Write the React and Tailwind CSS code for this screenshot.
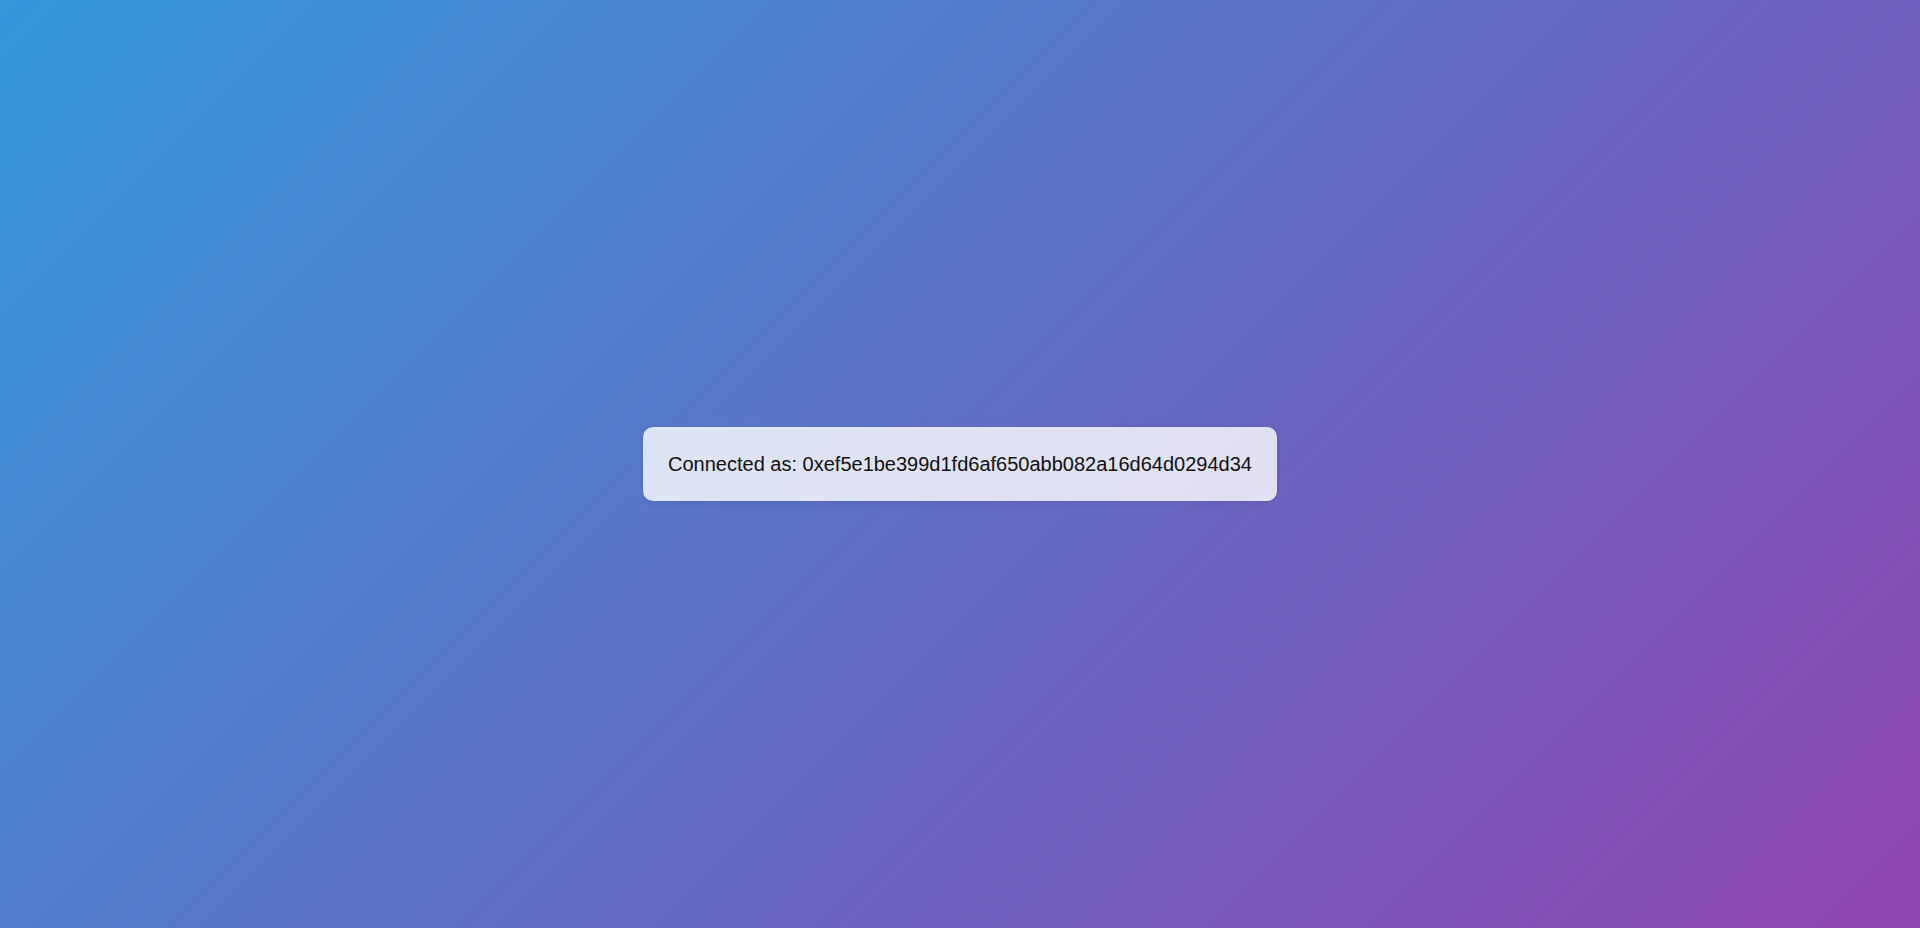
import React from "react";

export default function App() {
  const address = "0xef5e1be399d1fd6af650abb082a16d64d0294d34";

  return (
    <div className="h-screen w-full flex items-center justify-center bg-[linear-gradient(135deg,#3498db,#8e44ad)] font-['Liberation_Sans',Arial,sans-serif]">
      <div className="rounded-[10px] bg-white/80 px-[25px] py-[25px] shadow-[0_2px_8px_rgba(0,0,0,0.08)]">
        <p className="text-[20px] leading-[24px] text-[#111]">Connected as: {address}</p>
      </div>
    </div>
  );
}
